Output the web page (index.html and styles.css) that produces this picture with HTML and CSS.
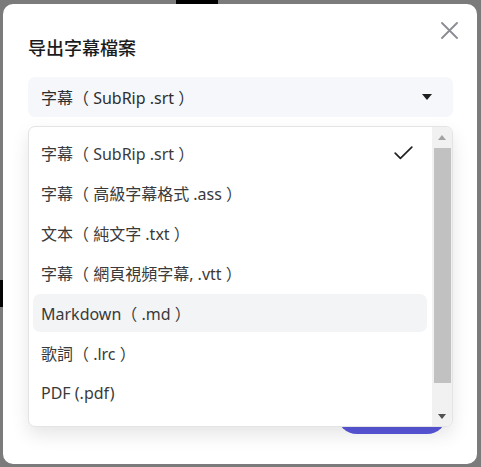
FILE: index.html
```html
<!DOCTYPE html>
<html lang="zh-Hant">
<head>
<meta charset="utf-8">
<title>导出字幕檔案</title>
<link rel="stylesheet" href="styles.css">
</head>
<body>
<div class="dialog">
  <button class="close" aria-label="關閉">
    <svg width="17" height="17" viewBox="0 0 17 17"><path d="M1 1L16 16M16 1L1 16" stroke="#8a8c92" stroke-width="1.8" fill="none" stroke-linecap="round"/></svg>
  </button>
  <h1 class="title">导出字幕檔案</h1>
  <div class="select">
    <span class="select-value">字幕（ SubRip .srt ）</span>
    <span class="caret"></span>
  </div>
  <div class="footer">
    <button class="primary">导出</button>
  </div>

  <div class="menu">
    <ul class="options">
      <li class="option selected"><span>字幕（ SubRip .srt ）</span>
        <svg class="check" width="19" height="14" viewBox="0 0 19 14"><path d="M1.2 7.2L6.4 12.4L17.8 1.2" stroke="#222" stroke-width="1.7" fill="none" stroke-linecap="round" stroke-linejoin="round"/></svg>
      </li>
      <li class="option"><span>字幕（ 高級字幕格式 .ass ）</span></li>
      <li class="option"><span>文本（ 純文字 .txt ）</span></li>
      <li class="option"><span>字幕（ 網頁視頻字幕, .vtt ）</span></li>
      <li class="option hover"><span>Markdown（ .md ）</span></li>
      <li class="option"><span>歌詞（ .lrc ）</span></li>
      <li class="option"><span>PDF (.pdf)</span></li>
      <li class="option"><span>Ebook (.epub)</span></li>
    </ul>
    <div class="scrollbar">
      <div class="sb-btn"><span class="arrow-up"></span></div>
      <div class="thumb"></div>
      <div class="sb-space"></div>
      <div class="sb-btn"><span class="arrow-down"></span></div>
    </div>
  </div>
</div>
</body>
</html>
```
FILE: styles.css
```css
* { box-sizing: border-box; }
html, body {
  margin: 0;
  padding: 0;
}
body {
  width: 481px;
  height: 467px;
  overflow: hidden;
  background:
    linear-gradient(#000, #000) 176px 0 / 42px 4px no-repeat,
    linear-gradient(#050505, #050505) 0 280px / 3px 27px no-repeat,
    #7b7b7b;
  font-family: "Noto Sans", "Noto Sans CJK TC", sans-serif;
  text-spacing-trim: space-all;
  padding: 4px 0 0 3px;
}
.dialog {
  position: relative;
  width: 474px;
  height: 460px;
  background: #fff;
  border-radius: 10px;
  padding: 31px 24px 30px 25px;
  display: flex;
  flex-direction: column;
}
.close {
  position: absolute;
  top: 18px;
  right: 19px;
  width: 17px;
  height: 17px;
  padding: 0;
  border: 0;
  background: none;
  display: flex;
}
.title {
  margin: 0;
  font-size: 18px;
  line-height: 26px;
  font-weight: 500;
  color: #1c1c1c;
}
.select {
  margin-top: 16px;
  height: 40px;
  background: #f6f7fb;
  border-radius: 7px;
  display: flex;
  align-items: center;
  justify-content: space-between;
  padding: 0 21px 0 13px;
  font-size: 16px;
  color: #2e2e2e;
}
.caret {
  width: 0;
  height: 0;
  border-left: 5px solid transparent;
  border-right: 5px solid transparent;
  border-top: 6px solid #1e1e1e;
}
.footer {
  margin-top: auto;
  display: flex;
  justify-content: flex-end;
  padding-right: 6px;
}
.primary {
  width: 110px;
  height: 40px;
  border: 0;
  border-radius: 20px;
  background: #5a57dd;
  color: #fff;
  font-family: inherit;
  font-size: 15px;
}
.menu {
  position: absolute;
  top: 122px;
  left: 25px;
  width: 425px;
  height: 301px;
  background: #fff;
  border: 1px solid #e4e4e4;
  border-radius: 7px;
  box-shadow: 0 8px 18px rgba(0, 0, 0, 0.10);
  display: flex;
  overflow: hidden;
}
.options {
  list-style: none;
  margin: 0;
  padding: 7px 5px 0 4px;
  flex: 1;
  overflow: hidden;
  display: flex;
  flex-direction: column;
  gap: 2px;
}
.option {
  flex: none;
  height: 38px;
  border-radius: 7px;
  padding: 0 14px 0 8px;
  display: flex;
  align-items: center;
  justify-content: space-between;
  font-size: 16px;
  color: #3a3a3a;
}
.option.hover {
  background: #f3f4f6;
}
.check { flex: none; }
.scrollbar {
  width: 20px;
  background: #f1f1f1;
  display: flex;
  flex-direction: column;
  align-items: center;
}
.sb-btn {
  height: 20px;
  width: 100%;
  display: flex;
  align-items: center;
  justify-content: center;
  flex: none;
}
.arrow-up {
  border-left: 4.5px solid transparent;
  border-right: 4.5px solid transparent;
  border-bottom: 5px solid #a3a3a3;
}
.arrow-down {
  border-left: 4.5px solid transparent;
  border-right: 4.5px solid transparent;
  border-top: 5px solid #505050;
}
.thumb {
  margin-top: 1px;
  width: 17px;
  height: 235px;
  background: #c1c1c1;
  flex: none;
}
.sb-space { flex: 1; }
```
